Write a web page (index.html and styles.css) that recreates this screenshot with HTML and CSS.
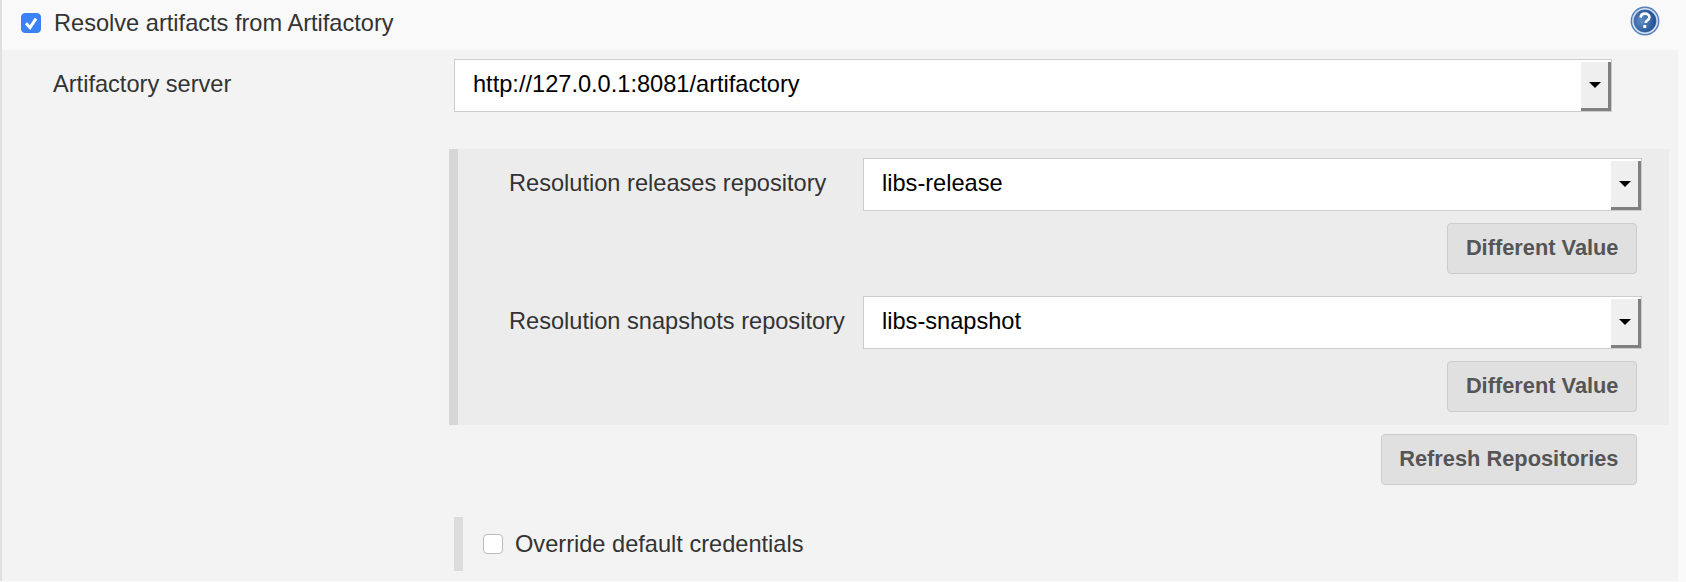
FILE: index.html
```html
<!DOCTYPE html>
<html lang="en">
<head>
    <meta charset="UTF-8">
    <title>Resolve artifacts from Artifactory</title>
    <link rel="stylesheet" href="styles.css">
</head>
<body>
    <div class="block-header">
        <label class="check-label">
            <input type="checkbox" class="check" checked>
            <span>Resolve artifacts from Artifactory</span>
        </label>
        <svg class="help-icon" width="30" height="30" viewBox="0 0 30 30">
            <defs>
                <radialGradient id="helpFill" cx="35%" cy="50%" r="70%">
                    <stop offset="0" stop-color="#5f8fc6"/>
                    <stop offset="1" stop-color="#1d4a8c"/>
                </radialGradient>
            </defs>
            <circle cx="15" cy="15" r="14.4" fill="#5580b8"/>
            <circle cx="15" cy="15" r="12.2" fill="none" stroke="#d5e1ef" stroke-width="1.5"/>
            <circle cx="15" cy="15" r="10.9" fill="url(#helpFill)"/>
            <path d="M10.6 11.6c.3-2.6 2.1-3.9 4.4-3.9 2.6 0 4.4 1.5 4.4 3.5 0 1.700-1 2.500-2.200 3.300-1 .7-1.400 1.200-1.400 2.400" fill="none" stroke="#fff" stroke-width="2.700"/>
            <rect x="13.300" y="19" width="3" height="3" fill="#fff"/>
        </svg>
    </div>

    <div class="panel">
        <div class="row server-row">
            <div class="field-label">Artifactory server</div>
            <div class="combo server-combo">
                <input type="text" class="combo-input" value="http://127.0.0.1:8081/artifactory" readonly>
                <span class="combo-btn"><i class="arrow"></i></span>
            </div>
        </div>

        <div class="nested">
            <div class="row">
                <div class="field-label nested-label">Resolution releases repository</div>
                <div class="combo">
                    <input type="text" class="combo-input" value="libs-release" readonly>
                    <span class="combo-btn"><i class="arrow"></i></span>
                </div>
            </div>
            <div class="btn-row">
                <button type="button" class="btn">Different Value</button>
            </div>
            <div class="row second-row">
                <div class="field-label nested-label">Resolution snapshots repository</div>
                <div class="combo">
                    <input type="text" class="combo-input" value="libs-snapshot" readonly>
                    <span class="combo-btn"><i class="arrow"></i></span>
                </div>
            </div>
            <div class="btn-row">
                <button type="button" class="btn">Different Value</button>
            </div>
        </div>

        <div class="refresh-row">
            <button type="button" class="btn">Refresh Repositories</button>
        </div>

        <div class="optional">
            <label class="check-label">
                <input type="checkbox" class="check">
                <span>Override default credentials</span>
            </label>
        </div>
    </div>
</body>
</html>
```

FILE: styles.css
```css
* {
    box-sizing: border-box;
}
html, body {
    height: 100%;
}
body {
    margin: 0;
    overflow: hidden;
    background-color: #f9f9f9;
    color: #333;
    font-family: "Liberation Sans", Arial, sans-serif;
    font-size: 23.6px;
}
.block-header {
    display: flex;
    align-items: center;
    justify-content: space-between;
    height: 50px;
    padding: 0 26px 4px 19px;
    border-left: 2px solid #e0e0e0;
}
.check-label {
    display: flex;
    align-items: center;
    gap: 13px;
}
.optional .check-label {
    gap: 12px;
}
.check {
    appearance: none;
    display: block;
    flex: none;
    width: 20px;
    height: 20px;
    margin: 0;
    border: 1px solid #bbb;
    border-radius: 4px;
    background-color: #fff;
}
.check:checked {
    border-color: #3b82f6;
    background: #3b82f6 url("data:image/svg+xml,%3Csvg xmlns='http://www.w3.org/2000/svg' viewBox='0 0 18 18'%3E%3Cpath d='M4 9.300l4 4.200 6-8.800' fill='none' stroke='white' stroke-width='3'/%3E%3C/svg%3E") center / 18px 18px no-repeat;
}
.help-icon {
    display: block;
    margin-bottom: 4px;
}
.panel {
    width: 1678px;
    height: 531px;
    border-left: 2px solid #e0e0e0;
    background-color: #f3f3f3;
    padding-top: 9px;
}
.row {
    display: flex;
    align-items: flex-start;
}
.server-row {
    padding-left: 51px;
}
.field-label {
    flex: none;
    width: 401px;
    padding-top: 12px;
}
.nested-label {
    width: 353px;
}
.combo {
    display: flex;
    width: 779px;
    height: 53px;
    border: 1px solid #ccc;
    background-color: #fff;
}
.server-combo {
    width: 1158px;
}
.combo-input {
    flex: 1;
    min-width: 0;
    border: 0;
    outline: 0;
    padding: 0 0 2px 18px;
    background: transparent;
    color: #000;
    font: inherit;
}
.combo-btn {
    display: flex;
    align-items: center;
    justify-content: center;
    flex: none;
    width: 30px;
    margin: 2px 0 0;
    background-color: #efefef;
    border-right: 3px solid #808080;
    border-bottom: 3px solid #808080;
}
.arrow {
    display: block;
    width: 0;
    height: 0;
    border-left: 6px solid transparent;
    border-right: 6px solid transparent;
    border-top: 6px solid #000;
}
.nested {
    width: 1220px;
    margin: 37px 0 0 447px;
    padding: 9px 0 13px 51px;
    border-left: 9px solid #d6d6d6;
    background-color: #ececec;
}
.nested-label {
    width: 354px;
}
.second-row {
    margin-top: 22px;
}
.btn-row {
    display: flex;
    justify-content: flex-end;
    margin: 12px 32px 0 0;
}
.btn {
    height: 51px;
    padding: 0 17.5px 2px;
    border: 1px solid #ccc;
    border-radius: 4px;
    background-color: #e0e0e0;
    color: #555;
    font-family: inherit;
    font-size: 21.8px;
    font-weight: bold;
}
.refresh-row {
    display: flex;
    justify-content: flex-end;
    margin: 9px 41px 0 0;
}
.optional {
    display: flex;
    align-items: center;
    height: 54px;
    margin: 32px 0 0 452px;
    padding-left: 20px;
    border-left: 9px solid #dcdcdc;
}
```
